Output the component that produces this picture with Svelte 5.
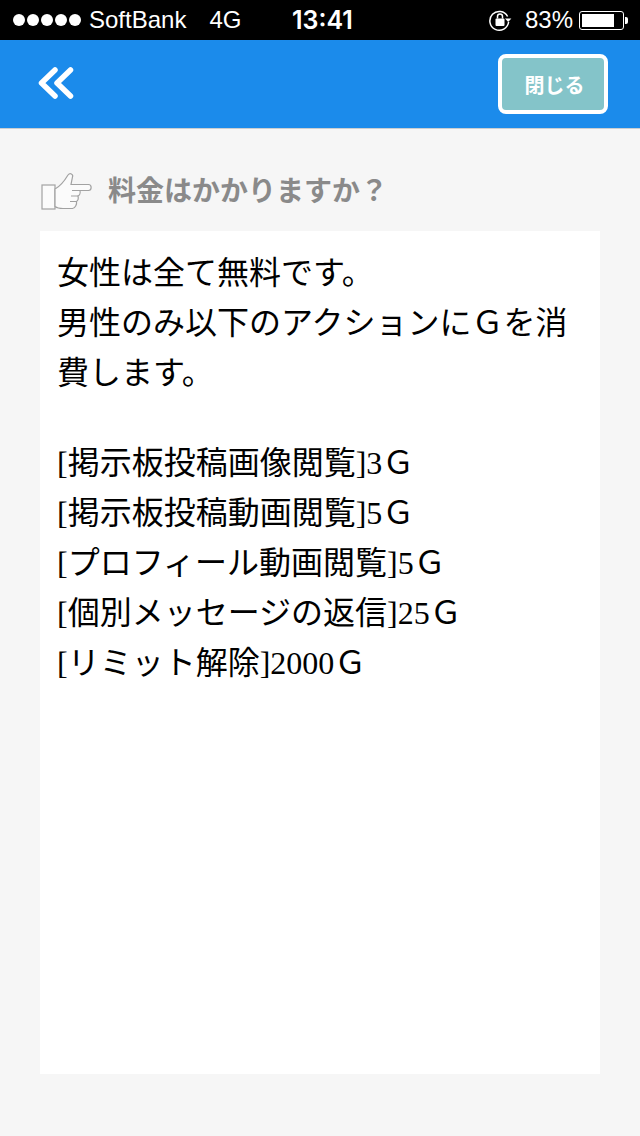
<script lang="ts">
    const lines = [
        '[掲示板投稿画像閲覧]3Ｇ',
        '[掲示板投稿動画閲覧]5Ｇ',
        '[プロフィール動画閲覧]5Ｇ',
        '[個別メッセージの返信]25Ｇ',
        '[リミット解除]2000Ｇ',
    ];
</script>

<div class="page">
    <div class="status">
        <div class="status-left">
            <span class="dots">
                {#each Array(5) as _}
                    <i></i>
                {/each}
            </span>
            <span class="carrier">SoftBank</span>
            <span class="net">4G</span>
        </div>
        <div class="time">13:41</div>
        <div class="status-right">
            <svg class="lock" width="24" height="24" viewBox="0 0 24 24" fill="none">
                <path d="M19.6 8.5A9.4 9.4 0 1 0 20.6 14" stroke="#fff" stroke-width="1.5"/>
                <path d="M17 10.5h6.4l-3.2 3.4z" fill="#fff"/>
                <rect x="7.5" y="10.5" width="9" height="7.5" rx="1" fill="#fff"/>
                <path d="M9.5 10.5V8.6a2.5 2.5 0 0 1 5 0v1.9" stroke="#fff" stroke-width="1.5"/>
            </svg>
            <span class="pct">83%</span>
            <span class="battery"><span class="level" style="width: 83%"></span></span>
            <span class="nub"></span>
        </div>
    </div>

    <header class="bar">
        <button class="back" aria-label="戻る">
            <svg width="36" height="32" viewBox="0 0 36 32" fill="none">
                <path d="M17 3L3.500 16L17 29M32.500 3L19 16L32.500 29" stroke="#fff" stroke-width="5.500" stroke-linecap="round" stroke-linejoin="round"/>
            </svg>
        </button>
        <button class="close">閉じる</button>
    </header>

    <main class="content">
        <div class="title">
            <svg class="hand" width="52" height="38" viewBox="0 0 52 38" fill="#fbfbfb" stroke="#a2a2a2" stroke-width="1.2">
                <rect x="2" y="13" width="13" height="24"/>
                <path d="M15 17C21 14 25 8 28 3C30 0.500 33.500 2 32.500 5L31 12.500H48.500C52 12.500 52 18.500 48.500 18.500H40C40.500 21 39.500 23.500 38 24C38.500 26 38 28.500 36.500 29.500C37 32 35.500 36 32.500 36.500H23C20 36.500 17 36 15 34.500Z"/>
                <path d="M40 18.500H32M38 24H31M36.500 29.500H30" fill="none"/>
            </svg>
            <h2>料金はかかりますか？</h2>
        </div>

        <div class="card">
            <p>女性は全て無料です。<br />男性のみ以下のアクションにＧを消費します。</p>
            <p>
                {#each lines as line}
                    {line}<br />
                {/each}
            </p>
        </div>
    </main>
</div>

<style>
    :global(body) {
        margin: 0;
    }

    .page {
        width: 640px;
        height: 1136px;
        display: flex;
        flex-direction: column;
        background: #f6f6f6;
        overflow: hidden;
    }

    .status {
        height: 40px;
        flex: none;
        background: #000;
        color: #fff;
        display: flex;
        align-items: center;
        justify-content: space-between;
        padding: 0 12px 0 13px;
        box-sizing: border-box;
        position: relative;
        font-family: "Liberation Sans", sans-serif;
        font-size: 24px;
    }

    .status-left,
    .status-right {
        display: flex;
        align-items: center;
    }

    .dots {
        display: flex;
        gap: 2px;
        margin-right: 8px;
    }

    .dots i {
        width: 12px;
        height: 12px;
        border-radius: 50%;
        background: #fff;
    }

    .net {
        margin-left: 23px;
    }

    .time {
        position: absolute;
        left: 292px;
        font-family: Inter, "Liberation Sans", sans-serif;
        font-weight: 600;
        font-size: 25px;
    }

    .lock {
        margin-right: 13px;
    }

    .battery {
        width: 45px;
        height: 19px;
        border: 1.5px solid #fff;
        border-radius: 3px;
        padding: 2px;
        margin-left: 6px;
        box-sizing: border-box;
        display: block;
    }

    .level {
        display: block;
        height: 100%;
        background: #fff;
    }

    .nub {
        width: 3px;
        height: 7px;
        margin-left: 1px;
        background: #fff;
        border-radius: 0 2px 2px 0;
    }

    .bar {
        height: 89px;
        flex: none;
        background: #1b8beb;
        border-bottom: 1px solid #c9ced2;
        box-sizing: border-box;
        display: flex;
        align-items: center;
        justify-content: space-between;
        padding: 0 32px 0 38px;
    }

    .back {
        background: none;
        border: none;
        padding: 0;
        margin-bottom: 2px;
        display: flex;
    }

    .close {
        width: 110px;
        height: 60px;
        background: #84c4c9;
        border: 4px solid #fff;
        border-radius: 8px;
        color: #fff;
        font-family: "Noto Sans CJK JP", sans-serif;
        font-weight: 700;
        font-size: 20px;
        padding: 0 0 0 3px;
    }

    .content {
        flex: 1;
        padding: 40px 40px 62px;
        display: flex;
        flex-direction: column;
        min-height: 0;
    }

    .title {
        display: flex;
        align-items: center;
        gap: 16px;
        height: 44px;
        margin-bottom: 18px;
    }

    .title h2 {
        margin: 0 0 5px;
        font-family: "Noto Sans CJK JP", sans-serif;
        font-weight: 700;
        font-size: 28px;
        line-height: 40px;
        color: #8a8a8a;
    }

    .card {
        flex: 1;
        background: #fff;
        padding: 17px 17px 0;
        font-family: "Liberation Serif", "Noto Sans CJK JP", serif;
        font-size: 32px;
        line-height: 50px;
        color: #000;
    }

    .card p {
        margin: 0 0 40px;
    }
</style>
